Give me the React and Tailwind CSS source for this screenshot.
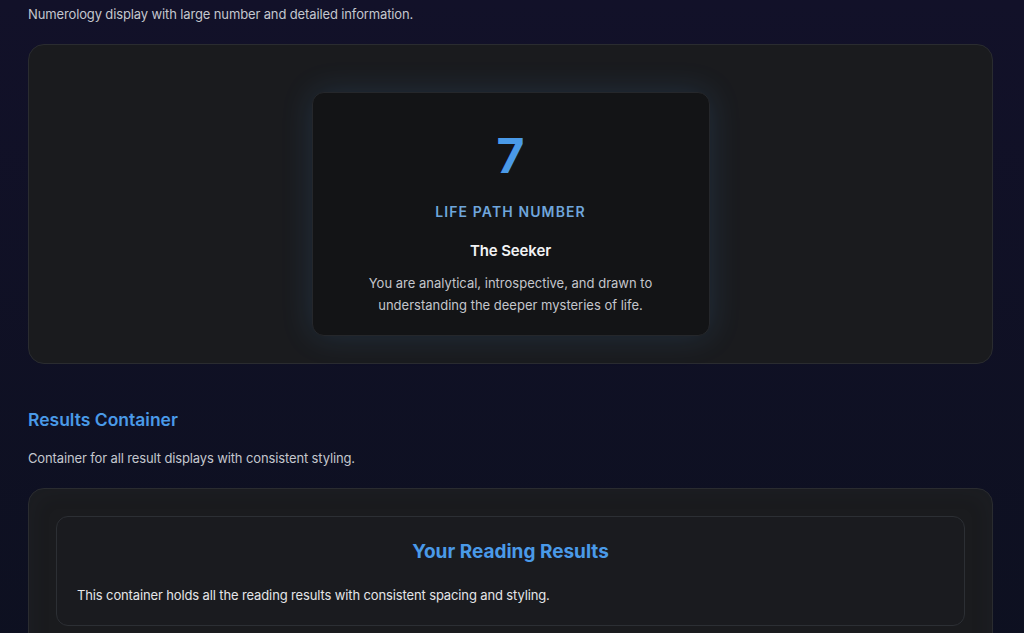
export default function App() {
  return (
    <div
      className="min-h-[633px] w-full bg-gradient-to-b from-[#121129] to-[#0d1020] pl-[28px] pr-[31px] text-[13px] tracking-[-0.01em] text-[#c4c7ce]"
      style={{ fontFamily: "Inter, 'Noto Sans', sans-serif" }}
    >
      <p className="pt-[4px] leading-[20px]">
        Numerology display with large number and detailed information.
      </p>

      <div className="mt-[20px] flex h-[320px] justify-center rounded-[16px] border border-[#2a2c30] bg-[#1a1b1e] pt-[47px]">
        <div className="h-[244px] w-[398px] rounded-[12px] border border-[#25272b] bg-[#131416] px-[28px] pt-[39px] text-center shadow-[0_0_32px_rgba(74,154,232,0.16)]">
          <div className="text-[48px] font-bold leading-[48px] tracking-normal text-[#4a9ae8]">7</div>
          <div className="mt-[22px] text-[14px] font-semibold uppercase leading-[20px] tracking-[0.08em] text-[#6fa6dc]">
            Life Path Number
          </div>
          <div className="mt-[17px] text-[15px] font-semibold leading-[24px] text-[#f2f3f5]">
            The Seeker
          </div>
          <p className="mt-[9px] text-[13px] leading-[22px] tracking-normal text-[#c4c6cc]">
            You are analytical, introspective, and drawn to understanding the deeper mysteries of life.
          </p>
        </div>
      </div>

      <h2 className="mt-[42px] text-[17.5px] font-semibold leading-[28px] tracking-normal text-[#4a9ae8]">
        Results Container
      </h2>
      <p className="mt-[14px] leading-[20px]">
        Container for all result displays with consistent styling.
      </p>

      <div className="mt-[20px] rounded-[16px] border border-[#2a2c30] bg-[#1a1b1e] p-[27px] pb-[40px] shadow-[inset_0_0_24px_rgba(60,80,110,0.08)]">
        <div className="rounded-[12px] border border-[#2c2f34] bg-[#1a1b1f] px-[20px] pt-[21px] pb-[20px]">
          <h3 className="text-center text-[19px] font-bold leading-[28px] tracking-normal text-[#4a9ae8]">
            Your Reading Results
          </h3>
          <p className="mt-[19px] leading-[20px] text-[#e4e5e8]">
            This container holds all the reading results with consistent spacing and styling.
          </p>
        </div>
      </div>
    </div>
  );
}
